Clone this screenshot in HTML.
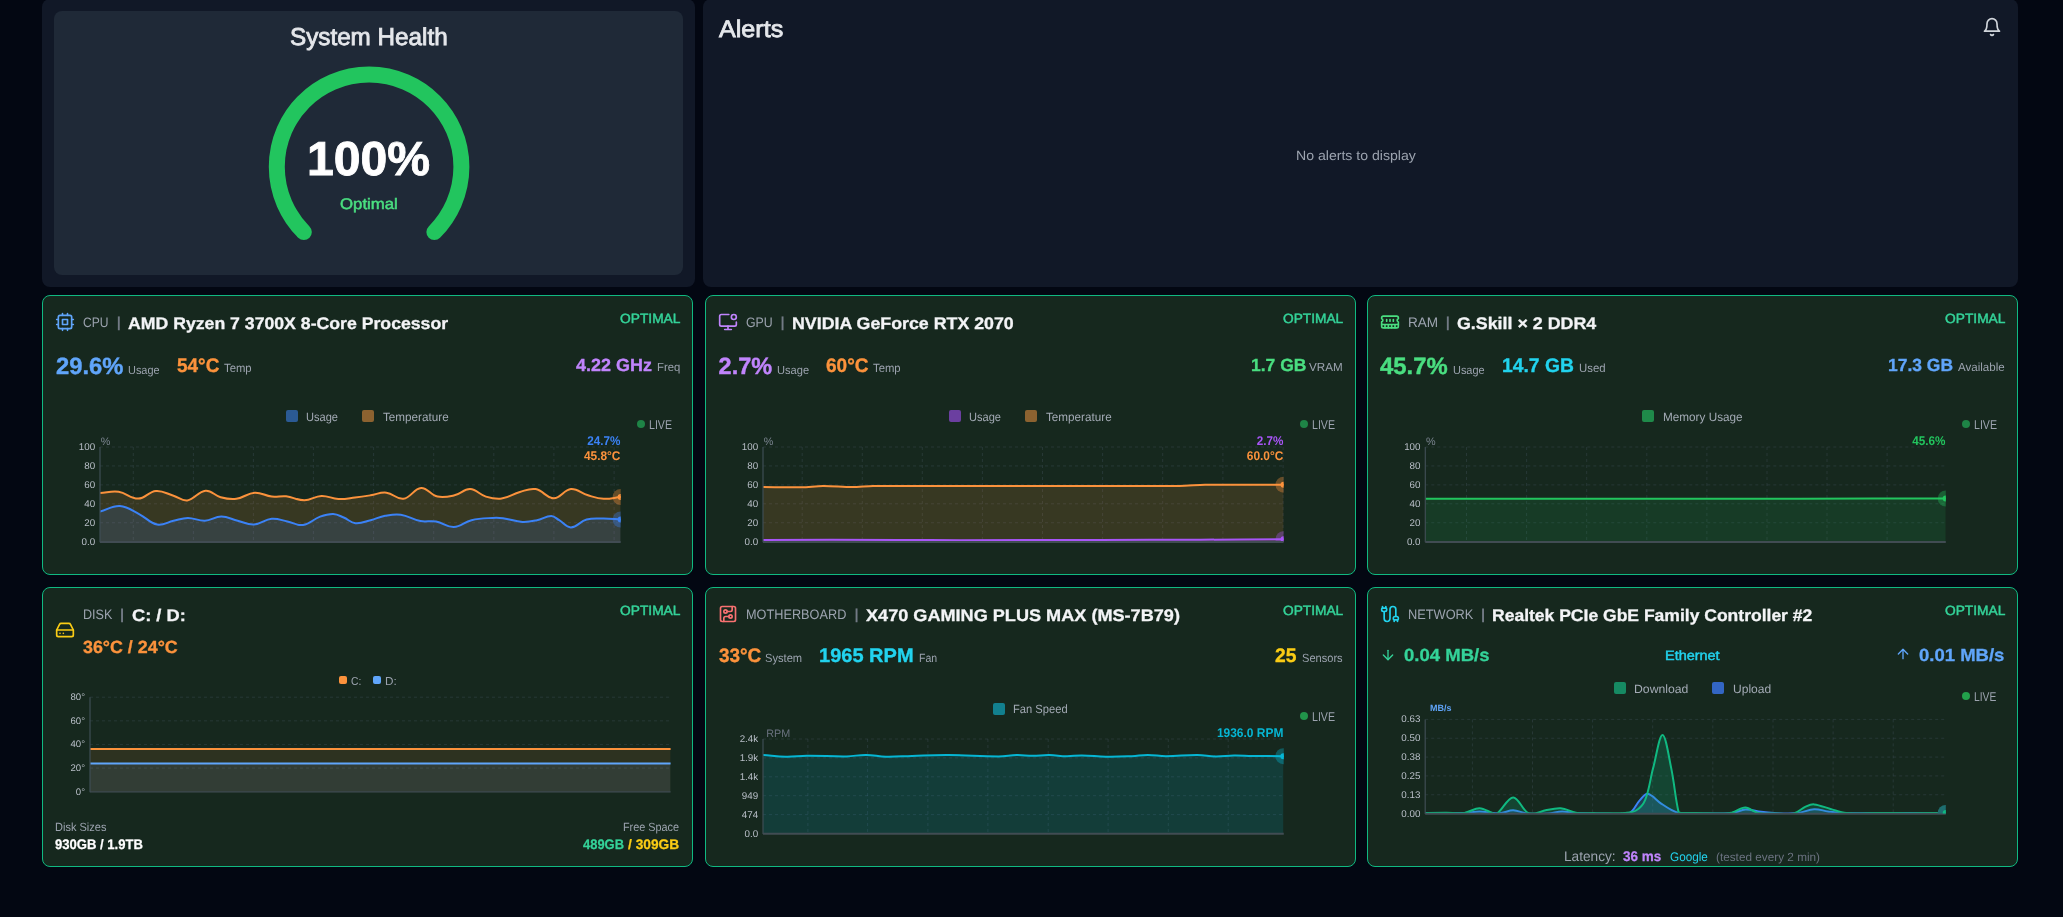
<!DOCTYPE html><html lang="en"><head><meta charset="utf-8"><title>System Monitor Dashboard</title>
<style>
*{box-sizing:border-box;margin:0;padding:0}
html,body{width:2063px;height:917px;overflow:hidden;background:#030712}
body{position:relative;font-family:"Liberation Sans", Arial, sans-serif;-webkit-font-smoothing:antialiased}
.card{position:absolute;border-radius:8px;overflow:hidden;will-change:transform}
.top{background:#111827}
.hw{background:#16281e;border:1px solid #10b981}
.hw>*{margin:-1px 0 0 -1px}
.inner{position:absolute;left:12px;top:12px;width:629px;height:264px;border-radius:8px;background:#1f2937}
.t{position:absolute;white-space:nowrap;line-height:1;transform-origin:0 0;display:block;text-rendering:geometricPrecision}
.ic,.chart,.lb{position:absolute;display:block}
.chart{left:0;top:0;pointer-events:none}
.chart text{font-family:"Liberation Sans", Arial, sans-serif;text-rendering:geometricPrecision}
</style></head><body>
<section class="card top" style="left:42px;top:-1px;width:653px;height:288px"><div class="inner"></div><svg class="chart" width="653" height="288" viewBox="0 0 653 288"><path d="M261.83 233.07A92.3 92.3 0 1 1 392.37 233.07" fill="none" stroke="#22c55e" stroke-width="16" stroke-linecap="round"/></svg><span class="t" style="left:248.20px;top:27.00px;font-size:24.3px;color:#e5e7eb;-webkit-text-stroke:0.83px;transform:scaleX(0.9976)">System Health</span><span class="t" style="left:264.96px;top:136.60px;font-size:47.6px;color:#ffffff;font-weight:700;-webkit-text-stroke:0.86px;transform:scaleX(1.0118)">100%</span><span class="t" style="left:297.80px;top:198.10px;font-size:15.3px;color:#4ade80;-webkit-text-stroke:0.52px;transform:scaleX(1.0974)">Optimal</span></section>
<section class="card top" style="left:703px;top:-1px;width:1315px;height:288px"><svg class="ic" style="left:1279.20px;top:18.00px" width="20" height="20" viewBox="0 0 24 24" fill="none" stroke="#d1d5db" stroke-width="2" stroke-linecap="round" stroke-linejoin="round"><path d="M6 8a6 6 0 0 1 12 0c0 7 3 9 3 9H3s3-2 3-9"/><path d="M10.3 21a1.94 1.94 0 0 0 3.4 0"/></svg><span class="t" style="left:15.90px;top:19.00px;font-size:23.9px;color:#e5e7eb;-webkit-text-stroke:0.81px;transform:scaleX(1.0520)">Alerts</span><span class="t" style="left:593.35px;top:150.00px;font-size:13.4px;color:#9ca3af;transform:scaleX(1.0523)">No alerts to display</span></section>
<section class="card hw" style="left:42px;top:295px;width:651px;height:280px"><svg class="ic" style="left:13.00px;top:17.00px" width="20" height="20" viewBox="0 0 24 24" fill="none" stroke="#60a5fa" stroke-width="2" stroke-linecap="round" stroke-linejoin="round"><rect width="16" height="16" x="4" y="4" rx="2"/><rect width="6" height="6" x="9" y="9"/><path d="M15 2v2M15 20v2M2 15h2M2 9h2M20 15h2M20 9h2M9 2v2M9 20v2"/></svg><i class="lb" style="left:244.00px;top:115.00px;width:12px;height:12px;background:#2b5a94;border-radius:2px"></i><i class="lb" style="left:320.00px;top:115.00px;width:12px;height:12px;background:#8c6230;border-radius:2px"></i><i class="lb" style="left:595.00px;top:125.00px;width:8px;height:8px;background:#1e8446;border-radius:50%"></i><svg class="chart" width="651" height="280" viewBox="0 0 651 280"><defs><clipPath id="clip-cpu"><rect x="58.00" y="140.00" width="520.70" height="106.70"/></clipPath></defs><line x1="58.00" x2="578.70" y1="152.00" y2="152.00" stroke="rgba(100,116,139,0.22)" stroke-width="1" stroke-dasharray="3 3"/><line x1="58.00" x2="578.70" y1="170.94" y2="170.94" stroke="rgba(100,116,139,0.22)" stroke-width="1" stroke-dasharray="3 3"/><line x1="58.00" x2="578.70" y1="189.88" y2="189.88" stroke="rgba(100,116,139,0.22)" stroke-width="1" stroke-dasharray="3 3"/><line x1="58.00" x2="578.70" y1="208.82" y2="208.82" stroke="rgba(100,116,139,0.22)" stroke-width="1" stroke-dasharray="3 3"/><line x1="58.00" x2="578.70" y1="227.76" y2="227.76" stroke="rgba(100,116,139,0.22)" stroke-width="1" stroke-dasharray="3 3"/><line x1="91.30" x2="91.30" y1="152.00" y2="246.70" stroke="rgba(100,116,139,0.22)" stroke-width="1" stroke-dasharray="3 3"/><line x1="151.40" x2="151.40" y1="152.00" y2="246.70" stroke="rgba(100,116,139,0.22)" stroke-width="1" stroke-dasharray="3 3"/><line x1="211.40" x2="211.40" y1="152.00" y2="246.70" stroke="rgba(100,116,139,0.22)" stroke-width="1" stroke-dasharray="3 3"/><line x1="271.40" x2="271.40" y1="152.00" y2="246.70" stroke="rgba(100,116,139,0.22)" stroke-width="1" stroke-dasharray="3 3"/><line x1="331.60" x2="331.60" y1="152.00" y2="246.70" stroke="rgba(100,116,139,0.22)" stroke-width="1" stroke-dasharray="3 3"/><line x1="391.70" x2="391.70" y1="152.00" y2="246.70" stroke="rgba(100,116,139,0.22)" stroke-width="1" stroke-dasharray="3 3"/><line x1="451.80" x2="451.80" y1="152.00" y2="246.70" stroke="rgba(100,116,139,0.22)" stroke-width="1" stroke-dasharray="3 3"/><line x1="511.90" x2="511.90" y1="152.00" y2="246.70" stroke="rgba(100,116,139,0.22)" stroke-width="1" stroke-dasharray="3 3"/><line x1="572.10" x2="572.10" y1="152.00" y2="246.70" stroke="rgba(100,116,139,0.22)" stroke-width="1" stroke-dasharray="3 3"/><g clip-path="url(#clip-cpu)"><path d="M58.0 198.1C65.4 197.6 69.4 195.8 76.6 196.8C84.6 198.0 88.5 203.8 96.2 203.6C103.4 203.4 106.6 196.6 113.9 196.0C120.8 195.4 124.5 198.6 131.5 200.7C137.1 202.4 140.0 206.3 145.3 205.5C152.8 204.3 156.1 196.4 163.6 195.7C169.5 195.1 172.4 200.6 178.6 202.2C184.6 203.8 188.2 204.6 194.3 203.8C201.8 202.8 205.2 198.2 212.7 197.7C219.4 197.3 222.8 200.8 229.7 201.6C235.4 202.3 238.4 200.7 244.1 201.3C251.5 202.1 255.1 205.4 262.4 205.3C269.2 205.2 272.5 201.2 279.4 200.9C286.1 200.6 289.6 203.7 296.4 204.0C303.0 204.3 306.4 203.3 313.0 202.5C319.3 201.8 322.4 201.3 328.7 200.3C335.0 199.3 338.3 197.0 344.4 197.7C351.4 198.4 354.9 204.7 361.4 203.8C368.8 202.8 371.9 193.6 379.1 193.1C385.5 192.7 388.6 200.1 395.5 201.6C401.9 203.0 405.9 201.8 412.5 200.3C419.0 198.8 422.0 193.8 428.2 194.1C434.6 194.4 437.3 199.6 443.9 201.6C449.9 203.4 453.5 204.4 459.6 203.6C467.1 202.6 470.4 199.1 477.9 197.0C484.0 195.3 487.6 193.0 493.6 194.1C501.2 195.5 504.6 203.3 511.9 203.3C518.8 203.3 521.9 194.7 528.9 194.1C535.5 193.5 539.0 198.2 546.0 200.3C552.2 202.1 555.4 203.5 561.7 203.8C568.4 204.1 571.8 202.7 578.6 202.0L578.6 246.7L58.0 246.7Z" fill="rgba(251,146,60,0.15)" stroke="none"/><path d="M58.0 198.1C65.4 197.6 69.4 195.8 76.6 196.8C84.6 198.0 88.5 203.8 96.2 203.6C103.4 203.4 106.6 196.6 113.9 196.0C120.8 195.4 124.5 198.6 131.5 200.7C137.1 202.4 140.0 206.3 145.3 205.5C152.8 204.3 156.1 196.4 163.6 195.7C169.5 195.1 172.4 200.6 178.6 202.2C184.6 203.8 188.2 204.6 194.3 203.8C201.8 202.8 205.2 198.2 212.7 197.7C219.4 197.3 222.8 200.8 229.7 201.6C235.4 202.3 238.4 200.7 244.1 201.3C251.5 202.1 255.1 205.4 262.4 205.3C269.2 205.2 272.5 201.2 279.4 200.9C286.1 200.6 289.6 203.7 296.4 204.0C303.0 204.3 306.4 203.3 313.0 202.5C319.3 201.8 322.4 201.3 328.7 200.3C335.0 199.3 338.3 197.0 344.4 197.7C351.4 198.4 354.9 204.7 361.4 203.8C368.8 202.8 371.9 193.6 379.1 193.1C385.5 192.7 388.6 200.1 395.5 201.6C401.9 203.0 405.9 201.8 412.5 200.3C419.0 198.8 422.0 193.8 428.2 194.1C434.6 194.4 437.3 199.6 443.9 201.6C449.9 203.4 453.5 204.4 459.6 203.6C467.1 202.6 470.4 199.1 477.9 197.0C484.0 195.3 487.6 193.0 493.6 194.1C501.2 195.5 504.6 203.3 511.9 203.3C518.8 203.3 521.9 194.7 528.9 194.1C535.5 193.5 539.0 198.2 546.0 200.3C552.2 202.1 555.4 203.5 561.7 203.8C568.4 204.1 571.8 202.7 578.6 202.0" fill="none" stroke="#fb923c" stroke-width="2" stroke-linejoin="round" stroke-linecap="round"/><path d="M58.0 216.6C66.0 214.4 70.1 210.5 77.9 211.0C85.9 211.5 89.9 215.5 97.5 219.3C104.8 222.9 107.7 228.1 115.2 229.5C121.3 230.7 125.0 227.2 131.5 225.8C137.2 224.6 140.1 222.9 145.9 222.9C152.7 222.9 156.2 226.1 162.9 225.8C169.5 225.5 172.7 221.6 179.3 221.6C185.9 221.6 189.1 224.2 195.7 225.8C202.2 227.4 205.6 229.9 212.0 229.5C219.2 229.1 222.5 224.4 229.7 223.8C235.9 223.2 239.2 225.3 245.4 226.5C251.7 227.7 255.1 230.9 261.1 230.0C268.2 228.9 271.0 224.2 278.1 221.6C283.1 219.8 286.0 218.8 291.2 219.0C295.5 219.2 297.6 220.8 301.7 222.5C306.5 224.5 308.5 227.7 313.4 228.2C319.3 228.8 322.7 226.7 328.7 225.2C334.5 223.7 337.2 221.9 343.1 220.8C349.3 219.7 352.7 218.8 358.8 219.7C366.8 220.9 370.4 224.6 378.4 226.1C384.5 227.3 388.0 225.4 394.1 226.5C401.3 227.8 404.8 232.4 411.8 232.1C419.0 231.8 422.2 226.9 429.5 225.2C437.6 223.3 442.0 223.4 450.4 222.9C454.6 222.6 456.7 222.6 460.9 223.2C468.8 224.2 472.6 226.4 480.5 226.9C486.2 227.2 489.2 226.4 494.9 225.2C500.8 224.0 503.7 221.0 509.3 221.0C512.6 221.0 514.1 223.4 517.2 225.2C521.9 228.0 524.1 232.5 528.9 232.4C535.1 232.2 538.0 226.3 544.6 224.5C551.1 222.8 554.9 223.6 561.7 223.6C568.5 223.6 571.8 224.1 578.6 224.5L578.6 246.7L58.0 246.7Z" fill="rgba(59,130,246,0.15)" stroke="none"/><path d="M58.0 216.6C66.0 214.4 70.1 210.5 77.9 211.0C85.9 211.5 89.9 215.5 97.5 219.3C104.8 222.9 107.7 228.1 115.2 229.5C121.3 230.7 125.0 227.2 131.5 225.8C137.2 224.6 140.1 222.9 145.9 222.9C152.7 222.9 156.2 226.1 162.9 225.8C169.5 225.5 172.7 221.6 179.3 221.6C185.9 221.6 189.1 224.2 195.7 225.8C202.2 227.4 205.6 229.9 212.0 229.5C219.2 229.1 222.5 224.4 229.7 223.8C235.9 223.2 239.2 225.3 245.4 226.5C251.7 227.7 255.1 230.9 261.1 230.0C268.2 228.9 271.0 224.2 278.1 221.6C283.1 219.8 286.0 218.8 291.2 219.0C295.5 219.2 297.6 220.8 301.7 222.5C306.5 224.5 308.5 227.7 313.4 228.2C319.3 228.8 322.7 226.7 328.7 225.2C334.5 223.7 337.2 221.9 343.1 220.8C349.3 219.7 352.7 218.8 358.8 219.7C366.8 220.9 370.4 224.6 378.4 226.1C384.5 227.3 388.0 225.4 394.1 226.5C401.3 227.8 404.8 232.4 411.8 232.1C419.0 231.8 422.2 226.9 429.5 225.2C437.6 223.3 442.0 223.4 450.4 222.9C454.6 222.6 456.7 222.6 460.9 223.2C468.8 224.2 472.6 226.4 480.5 226.9C486.2 227.2 489.2 226.4 494.9 225.2C500.8 224.0 503.7 221.0 509.3 221.0C512.6 221.0 514.1 223.4 517.2 225.2C521.9 228.0 524.1 232.5 528.9 232.4C535.1 232.2 538.0 226.3 544.6 224.5C551.1 222.8 554.9 223.6 561.7 223.6C568.5 223.6 571.8 224.1 578.6 224.5" fill="none" stroke="#3b82f6" stroke-width="2" stroke-linejoin="round" stroke-linecap="round"/><circle cx="578.6" cy="202.0" r="8" fill="#fb923c" fill-opacity="0.35"/><circle cx="578.6" cy="202.0" r="3" fill="#fb923c"/><circle cx="578.6" cy="224.5" r="8" fill="#3b82f6" fill-opacity="0.35"/><circle cx="578.6" cy="224.5" r="3" fill="#3b82f6"/></g><line x1="58.00" x2="58.00" y1="152.00" y2="247.20" stroke="#3f4d54" stroke-width="1.2"/><line x1="58.00" x2="578.70" y1="246.90" y2="246.90" stroke="#414c53" stroke-width="2"/><text x="53.20" y="155.01" text-anchor="end" font-size="9.8" fill="#b9bfc8">100</text><text x="53.20" y="173.95" text-anchor="end" font-size="9.8" fill="#b9bfc8">80</text><text x="53.20" y="192.89" text-anchor="end" font-size="9.8" fill="#b9bfc8">60</text><text x="53.20" y="211.83" text-anchor="end" font-size="9.8" fill="#b9bfc8">40</text><text x="53.20" y="230.77" text-anchor="end" font-size="9.8" fill="#b9bfc8">20</text><text x="53.20" y="249.71" text-anchor="end" font-size="9.8" fill="#b9bfc8">0.0</text><text x="58.8" y="149.8" font-size="10.8" fill="#7b8490">%</text><text x="545.30" y="150.00" font-size="12.6" font-weight="700" textLength="33.2" lengthAdjust="spacingAndGlyphs" fill="#3b82f6">24.7%</text><text x="541.90" y="165.20" font-size="12.6" font-weight="700" textLength="36.6" lengthAdjust="spacingAndGlyphs" fill="#fb923c">45.8°C</text></svg><span class="t" style="left:41.30px;top:20.90px;font-size:13.7px;color:#9ca3af;transform:scaleX(0.8817)">CPU</span><span class="t" style="left:74.80px;top:21.00px;font-size:14.6px;color:#727a85;font-weight:700">|</span><span class="t" style="left:86.40px;top:20.60px;font-size:16.8px;color:#f3f4f6;font-weight:700;-webkit-text-stroke:0.30px;transform:scaleX(1.0528)">AMD Ryzen 7 3700X 8-Core Processor</span><span class="t" style="left:577.90px;top:17.00px;font-size:13.4px;color:#34d399;-webkit-text-stroke:0.46px;transform:scaleX(1.0286)">OPTIMAL</span><span class="t" style="left:13.50px;top:59.80px;font-size:23.5px;color:#60a5fa;font-weight:700;-webkit-text-stroke:0.42px;transform:scaleX(1.0114)">29.6%</span><span class="t" style="left:86.40px;top:69.80px;font-size:11.8px;color:#9ca3af;transform:scaleX(0.9265)">Usage</span><span class="t" style="left:135.40px;top:62.00px;font-size:19.6px;color:#fb923c;font-weight:700;-webkit-text-stroke:0.35px;transform:scaleX(0.9672)">54°C</span><span class="t" style="left:182.00px;top:68.00px;font-size:11.9px;color:#9ca3af;transform:scaleX(0.9504)">Temp</span><span class="t" style="left:534.20px;top:61.80px;font-size:17.6px;color:#c084fc;font-weight:700;-webkit-text-stroke:0.32px;transform:scaleX(1.0212)">4.22 GHz</span><span class="t" style="left:614.70px;top:66.80px;font-size:11.8px;color:#9ca3af;transform:scaleX(0.9622)">Freq</span><span class="t" style="left:263.70px;top:115.90px;font-size:12.0px;color:#a3aab5;transform:scaleX(0.9225)">Usage</span><span class="t" style="left:341.00px;top:115.90px;font-size:12.0px;color:#a3aab5;transform:scaleX(0.9750)">Temperature</span><span class="t" style="left:606.67px;top:123.80px;font-size:12.8px;color:#9ca3af;transform:scaleX(0.8280)">LIVE</span></section>
<section class="card hw" style="left:705px;top:295px;width:651px;height:280px"><svg class="ic" style="left:13.00px;top:17.00px" width="20" height="20" viewBox="0 0 24 24" fill="none" stroke="#c084fc" stroke-width="2" stroke-linecap="round" stroke-linejoin="round"><circle cx="19" cy="6" r="3"/><path d="M22 12v3a2 2 0 0 1-2 2H4a2 2 0 0 1-2-2V5a2 2 0 0 1 2-2h9"/><path d="M12 17v4M8 21h8"/></svg><i class="lb" style="left:244.00px;top:115.00px;width:12px;height:12px;background:#6b3fa0;border-radius:2px"></i><i class="lb" style="left:320.00px;top:115.00px;width:12px;height:12px;background:#8c6230;border-radius:2px"></i><i class="lb" style="left:595.00px;top:125.00px;width:8px;height:8px;background:#1e8446;border-radius:50%"></i><svg class="chart" width="651" height="280" viewBox="0 0 651 280"><defs><clipPath id="clip-gpu"><rect x="58.00" y="140.00" width="520.60" height="106.70"/></clipPath></defs><line x1="58.00" x2="578.60" y1="152.00" y2="152.00" stroke="rgba(100,116,139,0.22)" stroke-width="1" stroke-dasharray="3 3"/><line x1="58.00" x2="578.60" y1="170.94" y2="170.94" stroke="rgba(100,116,139,0.22)" stroke-width="1" stroke-dasharray="3 3"/><line x1="58.00" x2="578.60" y1="189.88" y2="189.88" stroke="rgba(100,116,139,0.22)" stroke-width="1" stroke-dasharray="3 3"/><line x1="58.00" x2="578.60" y1="208.82" y2="208.82" stroke="rgba(100,116,139,0.22)" stroke-width="1" stroke-dasharray="3 3"/><line x1="58.00" x2="578.60" y1="227.76" y2="227.76" stroke="rgba(100,116,139,0.22)" stroke-width="1" stroke-dasharray="3 3"/><line x1="97.20" x2="97.20" y1="152.00" y2="246.70" stroke="rgba(100,116,139,0.22)" stroke-width="1" stroke-dasharray="3 3"/><line x1="157.30" x2="157.30" y1="152.00" y2="246.70" stroke="rgba(100,116,139,0.22)" stroke-width="1" stroke-dasharray="3 3"/><line x1="217.30" x2="217.30" y1="152.00" y2="246.70" stroke="rgba(100,116,139,0.22)" stroke-width="1" stroke-dasharray="3 3"/><line x1="277.40" x2="277.40" y1="152.00" y2="246.70" stroke="rgba(100,116,139,0.22)" stroke-width="1" stroke-dasharray="3 3"/><line x1="337.50" x2="337.50" y1="152.00" y2="246.70" stroke="rgba(100,116,139,0.22)" stroke-width="1" stroke-dasharray="3 3"/><line x1="397.60" x2="397.60" y1="152.00" y2="246.70" stroke="rgba(100,116,139,0.22)" stroke-width="1" stroke-dasharray="3 3"/><line x1="457.70" x2="457.70" y1="152.00" y2="246.70" stroke="rgba(100,116,139,0.22)" stroke-width="1" stroke-dasharray="3 3"/><line x1="517.90" x2="517.90" y1="152.00" y2="246.70" stroke="rgba(100,116,139,0.22)" stroke-width="1" stroke-dasharray="3 3"/><line x1="578.10" x2="578.10" y1="152.00" y2="246.70" stroke="rgba(100,116,139,0.22)" stroke-width="1" stroke-dasharray="3 3"/><g clip-path="url(#clip-gpu)"><path d="M58.0 192.0C69.7 192.1 85.3 192.5 97.0 192.3C103.3 192.2 111.7 191.0 118.0 191.0C126.7 190.9 138.3 192.0 147.0 192.0C153.3 192.0 161.7 191.1 168.0 191.0C176.1 190.8 186.9 191.0 195.0 191.0C225.0 191.0 265.0 191.0 295.0 191.0C325.0 191.0 365.0 191.0 395.0 191.0C418.7 191.0 450.3 191.3 474.0 191.0C481.8 190.9 492.2 190.0 500.0 189.8C510.5 189.6 524.5 189.7 535.0 189.7C548.0 189.7 565.5 189.7 578.5 189.7L578.5 246.7L58.0 246.7Z" fill="rgba(251,146,60,0.15)" stroke="none"/><path d="M58.0 192.0C69.7 192.1 85.3 192.5 97.0 192.3C103.3 192.2 111.7 191.0 118.0 191.0C126.7 190.9 138.3 192.0 147.0 192.0C153.3 192.0 161.7 191.1 168.0 191.0C176.1 190.8 186.9 191.0 195.0 191.0C225.0 191.0 265.0 191.0 295.0 191.0C325.0 191.0 365.0 191.0 395.0 191.0C418.7 191.0 450.3 191.3 474.0 191.0C481.8 190.9 492.2 190.0 500.0 189.8C510.5 189.6 524.5 189.7 535.0 189.7C548.0 189.7 565.5 189.7 578.5 189.7" fill="none" stroke="#fb923c" stroke-width="2" stroke-linejoin="round" stroke-linecap="round"/><path d="M58.0 244.9C99.1 244.9 153.9 244.8 195.0 244.9C213.0 244.9 237.0 245.2 255.0 245.2C297.0 245.2 353.0 245.0 395.0 244.9C425.0 244.8 465.0 244.8 495.0 244.7C520.1 244.6 553.5 244.4 578.5 244.2L578.5 246.7L58.0 246.7Z" fill="rgba(168,85,247,0.15)" stroke="none"/><path d="M58.0 244.9C99.1 244.9 153.9 244.8 195.0 244.9C213.0 244.9 237.0 245.2 255.0 245.2C297.0 245.2 353.0 245.0 395.0 244.9C425.0 244.8 465.0 244.8 495.0 244.7C520.1 244.6 553.5 244.4 578.5 244.2" fill="none" stroke="#a855f7" stroke-width="2" stroke-linejoin="round" stroke-linecap="round"/><circle cx="578.5" cy="189.7" r="8" fill="#fb923c" fill-opacity="0.35"/><circle cx="578.5" cy="189.7" r="3" fill="#fb923c"/><circle cx="578.5" cy="244.2" r="8" fill="#a855f7" fill-opacity="0.35"/><circle cx="578.5" cy="244.2" r="3" fill="#a855f7"/></g><line x1="58.00" x2="58.00" y1="152.00" y2="247.20" stroke="#3f4d54" stroke-width="1.2"/><line x1="58.00" x2="578.60" y1="246.90" y2="246.90" stroke="#414c53" stroke-width="2"/><text x="53.20" y="155.01" text-anchor="end" font-size="9.8" fill="#b9bfc8">100</text><text x="53.20" y="173.95" text-anchor="end" font-size="9.8" fill="#b9bfc8">80</text><text x="53.20" y="192.89" text-anchor="end" font-size="9.8" fill="#b9bfc8">60</text><text x="53.20" y="211.83" text-anchor="end" font-size="9.8" fill="#b9bfc8">40</text><text x="53.20" y="230.77" text-anchor="end" font-size="9.8" fill="#b9bfc8">20</text><text x="53.20" y="249.71" text-anchor="end" font-size="9.8" fill="#b9bfc8">0.0</text><text x="58.8" y="149.8" font-size="10.8" fill="#7b8490">%</text><text x="551.70" y="150.00" font-size="12.6" font-weight="700" textLength="26.7" lengthAdjust="spacingAndGlyphs" fill="#a855f7">2.7%</text><text x="541.80" y="165.20" font-size="12.6" font-weight="700" textLength="36.6" lengthAdjust="spacingAndGlyphs" fill="#fb923c">60.0°C</text></svg><span class="t" style="left:41.30px;top:20.90px;font-size:13.7px;color:#9ca3af;transform:scaleX(0.9001)">GPU</span><span class="t" style="left:75.60px;top:21.00px;font-size:14.6px;color:#727a85;font-weight:700">|</span><span class="t" style="left:86.94px;top:20.60px;font-size:16.8px;color:#f3f4f6;font-weight:700;-webkit-text-stroke:0.30px;transform:scaleX(1.0599)">NVIDIA GeForce RTX 2070</span><span class="t" style="left:577.90px;top:17.00px;font-size:13.4px;color:#34d399;-webkit-text-stroke:0.46px;transform:scaleX(1.0234)">OPTIMAL</span><span class="t" style="left:13.60px;top:59.80px;font-size:23.5px;color:#c084fc;font-weight:700;-webkit-text-stroke:0.42px">2.7%</span><span class="t" style="left:72.30px;top:69.80px;font-size:11.8px;color:#9ca3af;transform:scaleX(0.9410)">Usage</span><span class="t" style="left:121.20px;top:62.00px;font-size:19.6px;color:#fb923c;font-weight:700;-webkit-text-stroke:0.35px;transform:scaleX(0.9695)">60°C</span><span class="t" style="left:168.00px;top:68.00px;font-size:11.9px;color:#9ca3af;transform:scaleX(0.9504)">Temp</span><span class="t" style="left:545.60px;top:61.80px;font-size:17.6px;color:#4ade80;font-weight:700;-webkit-text-stroke:0.32px;transform:scaleX(0.9957)">1.7 GB</span><span class="t" style="left:604.40px;top:66.80px;font-size:11.8px;color:#9ca3af;transform:scaleX(0.9863)">VRAM</span><span class="t" style="left:263.70px;top:115.90px;font-size:12.0px;color:#a3aab5;transform:scaleX(0.9225)">Usage</span><span class="t" style="left:341.00px;top:115.90px;font-size:12.0px;color:#a3aab5;transform:scaleX(0.9750)">Temperature</span><span class="t" style="left:606.67px;top:123.80px;font-size:12.8px;color:#9ca3af;transform:scaleX(0.8280)">LIVE</span></section>
<section class="card hw" style="left:1367px;top:295px;width:651px;height:280px"><svg class="ic" style="left:13.00px;top:17.00px" width="20" height="20" viewBox="0 0 24 24" fill="none" stroke="#4ade80" stroke-width="2" stroke-linecap="round" stroke-linejoin="round"><path d="M6 19v-3M10 19v-3M14 19v-3M18 19v-3M8 11V9M16 11V9M12 11V9M2 15h20"/><path d="M2 7a2 2 0 0 1 2-2h16a2 2 0 0 1 2 2v1.1a2 2 0 0 0 0 3.837V17a2 2 0 0 1-2 2H4a2 2 0 0 1-2-2v-5.1a2 2 0 0 0 0-3.837Z"/></svg><i class="lb" style="left:275.00px;top:115.00px;width:12px;height:12px;background:#1f8a4a;border-radius:2px"></i><i class="lb" style="left:595.00px;top:125.00px;width:8px;height:8px;background:#1e8446;border-radius:50%"></i><svg class="chart" width="651" height="280" viewBox="0 0 651 280"><defs><clipPath id="clip-ram"><rect x="58.30" y="140.00" width="520.50" height="106.70"/></clipPath></defs><line x1="58.30" x2="578.80" y1="152.00" y2="152.00" stroke="rgba(100,116,139,0.22)" stroke-width="1" stroke-dasharray="3 3"/><line x1="58.30" x2="578.80" y1="170.94" y2="170.94" stroke="rgba(100,116,139,0.22)" stroke-width="1" stroke-dasharray="3 3"/><line x1="58.30" x2="578.80" y1="189.88" y2="189.88" stroke="rgba(100,116,139,0.22)" stroke-width="1" stroke-dasharray="3 3"/><line x1="58.30" x2="578.80" y1="208.82" y2="208.82" stroke="rgba(100,116,139,0.22)" stroke-width="1" stroke-dasharray="3 3"/><line x1="58.30" x2="578.80" y1="227.76" y2="227.76" stroke="rgba(100,116,139,0.22)" stroke-width="1" stroke-dasharray="3 3"/><line x1="99.50" x2="99.50" y1="152.00" y2="246.70" stroke="rgba(100,116,139,0.22)" stroke-width="1" stroke-dasharray="3 3"/><line x1="159.60" x2="159.60" y1="152.00" y2="246.70" stroke="rgba(100,116,139,0.22)" stroke-width="1" stroke-dasharray="3 3"/><line x1="219.70" x2="219.70" y1="152.00" y2="246.70" stroke="rgba(100,116,139,0.22)" stroke-width="1" stroke-dasharray="3 3"/><line x1="279.80" x2="279.80" y1="152.00" y2="246.70" stroke="rgba(100,116,139,0.22)" stroke-width="1" stroke-dasharray="3 3"/><line x1="339.90" x2="339.90" y1="152.00" y2="246.70" stroke="rgba(100,116,139,0.22)" stroke-width="1" stroke-dasharray="3 3"/><line x1="400.00" x2="400.00" y1="152.00" y2="246.70" stroke="rgba(100,116,139,0.22)" stroke-width="1" stroke-dasharray="3 3"/><line x1="460.00" x2="460.00" y1="152.00" y2="246.70" stroke="rgba(100,116,139,0.22)" stroke-width="1" stroke-dasharray="3 3"/><line x1="520.10" x2="520.10" y1="152.00" y2="246.70" stroke="rgba(100,116,139,0.22)" stroke-width="1" stroke-dasharray="3 3"/><g clip-path="url(#clip-ram)"><path d="M58.3 203.8C93.2 203.8 198.1 203.8 233.0 203.8C273.0 203.8 393.0 203.7 433.0 203.7C462.1 203.7 549.6 203.5 578.7 203.5L578.7 246.7L58.3 246.7Z" fill="rgba(34,197,94,0.13)" stroke="none"/><path d="M58.3 203.8C93.2 203.8 198.1 203.8 233.0 203.8C273.0 203.8 393.0 203.7 433.0 203.7C462.1 203.7 549.6 203.5 578.7 203.5" fill="none" stroke="#22c55e" stroke-width="2" stroke-linejoin="round" stroke-linecap="round"/><circle cx="578.7" cy="203.5" r="8" fill="#22c55e" fill-opacity="0.35"/><circle cx="578.7" cy="203.5" r="3" fill="#22c55e"/></g><line x1="58.30" x2="58.30" y1="152.00" y2="247.20" stroke="#3f4d54" stroke-width="1.2"/><line x1="58.30" x2="578.80" y1="246.90" y2="246.90" stroke="#414c53" stroke-width="2"/><text x="53.50" y="155.01" text-anchor="end" font-size="9.8" fill="#b9bfc8">100</text><text x="53.50" y="173.95" text-anchor="end" font-size="9.8" fill="#b9bfc8">80</text><text x="53.50" y="192.89" text-anchor="end" font-size="9.8" fill="#b9bfc8">60</text><text x="53.50" y="211.83" text-anchor="end" font-size="9.8" fill="#b9bfc8">40</text><text x="53.50" y="230.77" text-anchor="end" font-size="9.8" fill="#b9bfc8">20</text><text x="53.50" y="249.71" text-anchor="end" font-size="9.8" fill="#b9bfc8">0.0</text><text x="59.1" y="149.8" font-size="10.8" fill="#7b8490">%</text><text x="545.20" y="150.00" font-size="12.6" font-weight="700" textLength="33.2" lengthAdjust="spacingAndGlyphs" fill="#22c55e">45.6%</text></svg><span class="t" style="left:40.61px;top:20.90px;font-size:13.7px;color:#9ca3af;transform:scaleX(0.9926)">RAM</span><span class="t" style="left:78.80px;top:21.00px;font-size:14.6px;color:#727a85;font-weight:700">|</span><span class="t" style="left:90.40px;top:20.60px;font-size:16.8px;color:#f3f4f6;font-weight:700;-webkit-text-stroke:0.30px;transform:scaleX(1.0622)">G.Skill × 2 DDR4</span><span class="t" style="left:577.70px;top:17.00px;font-size:13.4px;color:#34d399;-webkit-text-stroke:0.46px;transform:scaleX(1.0286)">OPTIMAL</span><span class="t" style="left:13.10px;top:59.80px;font-size:23.5px;color:#4ade80;font-weight:700;-webkit-text-stroke:0.42px;transform:scaleX(1.0144)">45.7%</span><span class="t" style="left:86.40px;top:69.80px;font-size:11.8px;color:#9ca3af;transform:scaleX(0.9265)">Usage</span><span class="t" style="left:135.02px;top:62.00px;font-size:19.6px;color:#22d3ee;font-weight:700;-webkit-text-stroke:0.35px;transform:scaleX(0.9844)">14.7 GB</span><span class="t" style="left:211.50px;top:68.00px;font-size:11.9px;color:#9ca3af;transform:scaleX(0.9578)">Used</span><span class="t" style="left:521.41px;top:61.80px;font-size:17.6px;color:#60a5fa;font-weight:700;-webkit-text-stroke:0.32px;transform:scaleX(0.9919)">17.3 GB</span><span class="t" style="left:590.60px;top:66.80px;font-size:11.8px;color:#9ca3af;transform:scaleX(0.9792)">Available</span><span class="t" style="left:295.70px;top:115.90px;font-size:12.0px;color:#a3aab5;transform:scaleX(0.9782)">Memory Usage</span><span class="t" style="left:606.97px;top:123.80px;font-size:12.8px;color:#9ca3af;transform:scaleX(0.8280)">LIVE</span></section>
<section class="card hw" style="left:42px;top:587px;width:651px;height:280px"><svg class="ic" style="left:13.00px;top:33.00px" width="20" height="20" viewBox="0 0 24 24" fill="none" stroke="#facc15" stroke-width="2" stroke-linecap="round" stroke-linejoin="round"><line x1="22" x2="2" y1="12" y2="12"/><path d="M5.45 5.11 2 12v6a2 2 0 0 0 2 2h16a2 2 0 0 0 2-2v-6l-3.45-6.89A2 2 0 0 0 16.76 4H7.24a2 2 0 0 0-1.79 1.11z"/><line x1="6" x2="6.01" y1="16" y2="16"/><line x1="10" x2="10.01" y1="16" y2="16"/></svg><i class="lb" style="left:297.00px;top:89.00px;width:8px;height:8px;background:#fb923c;border-radius:2px"></i><i class="lb" style="left:331.00px;top:89.00px;width:8px;height:8px;background:#60a5fa;border-radius:2px"></i><svg class="chart" width="651" height="280" viewBox="0 0 651 280"><defs><clipPath id="clip-disk"><rect x="48.00" y="98.20" width="580.60" height="106.50"/></clipPath></defs><line x1="48.00" x2="628.60" y1="110.20" y2="110.20" stroke="rgba(100,116,139,0.22)" stroke-width="1" stroke-dasharray="3 3"/><line x1="48.00" x2="628.60" y1="133.83" y2="133.83" stroke="rgba(100,116,139,0.22)" stroke-width="1" stroke-dasharray="3 3"/><line x1="48.00" x2="628.60" y1="157.45" y2="157.45" stroke="rgba(100,116,139,0.22)" stroke-width="1" stroke-dasharray="3 3"/><line x1="48.00" x2="628.60" y1="181.08" y2="181.08" stroke="rgba(100,116,139,0.22)" stroke-width="1" stroke-dasharray="3 3"/><g clip-path="url(#clip-disk)"><path d="M48.0 162.1L628.6 162.1L628.6 204.7L48.0 204.7Z" fill="rgba(251,146,60,0.1)" stroke="none"/><path d="M48.0 162.1L628.6 162.1" fill="none" stroke="#fb923c" stroke-width="2" stroke-linejoin="round" stroke-linecap="round"/><path d="M48.0 176.4L628.6 176.4L628.6 204.7L48.0 204.7Z" fill="rgba(96,165,250,0.1)" stroke="none"/><path d="M48.0 176.4L628.6 176.4" fill="none" stroke="#60a5fa" stroke-width="2" stroke-linejoin="round" stroke-linecap="round"/></g><line x1="48.00" x2="48.00" y1="110.20" y2="205.20" stroke="#3f4d54" stroke-width="1.2"/><line x1="48.00" x2="628.60" y1="204.90" y2="204.90" stroke="#414c53" stroke-width="1.3"/><text x="43.00" y="113.14" text-anchor="end" font-size="9.6" fill="#b9bfc8">80°</text><text x="43.00" y="136.76" text-anchor="end" font-size="9.6" fill="#b9bfc8">60°</text><text x="43.00" y="160.39" text-anchor="end" font-size="9.6" fill="#b9bfc8">40°</text><text x="43.00" y="184.01" text-anchor="end" font-size="9.6" fill="#b9bfc8">20°</text><text x="43.00" y="207.64" text-anchor="end" font-size="9.6" fill="#b9bfc8">0°</text></svg><span class="t" style="left:40.68px;top:20.90px;font-size:13.7px;color:#9ca3af;transform:scaleX(0.9183)">DISK</span><span class="t" style="left:78.00px;top:21.00px;font-size:14.6px;color:#727a85;font-weight:700">|</span><span class="t" style="left:89.60px;top:20.60px;font-size:16.8px;color:#f3f4f6;font-weight:700;-webkit-text-stroke:0.30px;transform:scaleX(1.0876)">C: / D:</span><span class="t" style="left:577.90px;top:17.00px;font-size:13.4px;color:#34d399;-webkit-text-stroke:0.46px;transform:scaleX(1.0286)">OPTIMAL</span><span class="t" style="left:41.30px;top:51.60px;font-size:17.6px;color:#fb923c;font-weight:700;-webkit-text-stroke:0.32px;transform:scaleX(1.0152)">36°C / 24°C</span><span class="t" style="left:309.00px;top:88.60px;font-size:11.6px;color:#9ca3af;transform:scaleX(0.8881)">C:</span><span class="t" style="left:342.90px;top:88.60px;font-size:11.6px;color:#9ca3af;transform:scaleX(1.0112)">D:</span><span class="t" style="left:13.30px;top:234.90px;font-size:11.9px;color:#9ca3af;transform:scaleX(0.9270)">Disk Sizes</span><span class="t" style="left:12.80px;top:250.80px;font-size:13.8px;color:#ffffff;font-weight:700;-webkit-text-stroke:0.25px;transform:scaleX(0.9481)">930GB / 1.9TB</span><span class="t" style="left:580.80px;top:234.90px;font-size:11.9px;color:#9ca3af;transform:scaleX(0.9118)">Free Space</span><span class="t" style="left:541.00px;top:250.70px;font-size:13.8px;color:#34d399;font-weight:700;-webkit-text-stroke:0.25px;transform:scaleX(0.9371)">489GB</span><span class="t" style="left:586.00px;top:250.70px;font-size:13.8px;color:#facc15;font-weight:700;-webkit-text-stroke:0.25px;transform:scaleX(0.9958)">/ 309GB</span></section>
<section class="card hw" style="left:705px;top:587px;width:651px;height:280px"><svg class="ic" style="left:13.00px;top:17.00px" width="20" height="20" viewBox="0 0 24 24" fill="none" stroke="#f87171" stroke-width="2" stroke-linecap="round" stroke-linejoin="round"><rect width="18" height="18" x="3" y="3" rx="2"/><path d="M11 9h4a2 2 0 0 0 2-2V3"/><circle cx="9" cy="9" r="2"/><path d="M7 21v-4a2 2 0 0 1 2-2h4"/><circle cx="15" cy="15" r="2"/></svg><i class="lb" style="left:288.00px;top:115.50px;width:12px;height:12px;background:#12808f;border-radius:2px"></i><i class="lb" style="left:595.00px;top:125.00px;width:8px;height:8px;background:#21944a;border-radius:50%"></i><svg class="chart" width="651" height="280" viewBox="0 0 651 280"><defs><clipPath id="clip-mobo"><rect x="58.00" y="140.00" width="520.80" height="106.50"/></clipPath></defs><line x1="58.00" x2="578.80" y1="152.00" y2="152.00" stroke="rgba(100,116,139,0.22)" stroke-width="1" stroke-dasharray="3 3"/><line x1="58.00" x2="578.80" y1="170.90" y2="170.90" stroke="rgba(100,116,139,0.22)" stroke-width="1" stroke-dasharray="3 3"/><line x1="58.00" x2="578.80" y1="189.80" y2="189.80" stroke="rgba(100,116,139,0.22)" stroke-width="1" stroke-dasharray="3 3"/><line x1="58.00" x2="578.80" y1="208.70" y2="208.70" stroke="rgba(100,116,139,0.22)" stroke-width="1" stroke-dasharray="3 3"/><line x1="58.00" x2="578.80" y1="227.60" y2="227.60" stroke="rgba(100,116,139,0.22)" stroke-width="1" stroke-dasharray="3 3"/><line x1="102.90" x2="102.90" y1="152.00" y2="246.50" stroke="rgba(100,116,139,0.22)" stroke-width="1" stroke-dasharray="3 3"/><line x1="162.60" x2="162.60" y1="152.00" y2="246.50" stroke="rgba(100,116,139,0.22)" stroke-width="1" stroke-dasharray="3 3"/><line x1="222.90" x2="222.90" y1="152.00" y2="246.50" stroke="rgba(100,116,139,0.22)" stroke-width="1" stroke-dasharray="3 3"/><line x1="282.90" x2="282.90" y1="152.00" y2="246.50" stroke="rgba(100,116,139,0.22)" stroke-width="1" stroke-dasharray="3 3"/><line x1="343.20" x2="343.20" y1="152.00" y2="246.50" stroke="rgba(100,116,139,0.22)" stroke-width="1" stroke-dasharray="3 3"/><line x1="403.10" x2="403.10" y1="152.00" y2="246.50" stroke="rgba(100,116,139,0.22)" stroke-width="1" stroke-dasharray="3 3"/><line x1="463.30" x2="463.30" y1="152.00" y2="246.50" stroke="rgba(100,116,139,0.22)" stroke-width="1" stroke-dasharray="3 3"/><line x1="523.20" x2="523.20" y1="152.00" y2="246.50" stroke="rgba(100,116,139,0.22)" stroke-width="1" stroke-dasharray="3 3"/><g clip-path="url(#clip-mobo)"><path d="M58.0 167.9C67.2 168.6 71.8 169.5 81.0 169.7C89.4 169.9 93.6 168.7 102.0 168.7C117.8 168.6 125.8 169.6 141.6 169.4C149.4 169.3 153.2 167.8 161.0 167.9C169.0 168.0 173.0 169.5 181.0 169.7C191.4 169.9 196.6 169.2 207.0 168.9C221.7 168.5 229.0 168.0 243.7 168.1C263.6 168.2 273.6 169.4 293.5 169.4C300.8 169.4 304.5 168.3 311.8 168.1C318.1 168.0 321.2 168.7 327.5 168.7C334.3 168.7 337.7 168.0 344.5 168.1C351.3 168.2 354.7 169.1 361.5 169.2C367.7 169.3 370.8 168.3 377.0 168.4C386.5 168.5 391.3 169.5 400.8 169.7C411.3 169.9 416.5 169.6 427.0 169.2C433.3 168.9 436.4 167.9 442.7 167.9C450.0 167.9 453.7 169.2 461.0 169.2C473.6 169.2 479.9 167.8 492.4 167.9C499.7 167.9 503.4 169.3 510.7 169.4C518.0 169.5 521.7 168.5 529.0 168.4C536.4 168.3 540.0 168.8 547.4 168.9C559.8 169.1 565.9 169.1 578.3 169.2L578.3 246.5L58.0 246.5Z" fill="rgba(6,182,212,0.15)" stroke="none"/><path d="M58.0 167.9C67.2 168.6 71.8 169.5 81.0 169.7C89.4 169.9 93.6 168.7 102.0 168.7C117.8 168.6 125.8 169.6 141.6 169.4C149.4 169.3 153.2 167.8 161.0 167.9C169.0 168.0 173.0 169.5 181.0 169.7C191.4 169.9 196.6 169.2 207.0 168.9C221.7 168.5 229.0 168.0 243.7 168.1C263.6 168.2 273.6 169.4 293.5 169.4C300.8 169.4 304.5 168.3 311.8 168.1C318.1 168.0 321.2 168.7 327.5 168.7C334.3 168.7 337.7 168.0 344.5 168.1C351.3 168.2 354.7 169.1 361.5 169.2C367.7 169.3 370.8 168.3 377.0 168.4C386.5 168.5 391.3 169.5 400.8 169.7C411.3 169.9 416.5 169.6 427.0 169.2C433.3 168.9 436.4 167.9 442.7 167.9C450.0 167.9 453.7 169.2 461.0 169.2C473.6 169.2 479.9 167.8 492.4 167.9C499.7 167.9 503.4 169.3 510.7 169.4C518.0 169.5 521.7 168.5 529.0 168.4C536.4 168.3 540.0 168.8 547.4 168.9C559.8 169.1 565.9 169.1 578.3 169.2" fill="none" stroke="#06b6d4" stroke-width="2" stroke-linejoin="round" stroke-linecap="round"/><circle cx="578.3" cy="169.2" r="8" fill="#06b6d4" fill-opacity="0.35"/><circle cx="578.3" cy="169.2" r="3" fill="#06b6d4"/></g><line x1="58.00" x2="58.00" y1="152.00" y2="247.00" stroke="#3f4d54" stroke-width="1.2"/><line x1="58.00" x2="578.80" y1="246.70" y2="246.70" stroke="#414c53" stroke-width="2"/><text x="53.20" y="155.01" text-anchor="end" font-size="9.8" fill="#b9bfc8">2.4k</text><text x="53.20" y="173.91" text-anchor="end" font-size="9.8" fill="#b9bfc8">1.9k</text><text x="53.20" y="192.81" text-anchor="end" font-size="9.8" fill="#b9bfc8">1.4k</text><text x="53.20" y="211.71" text-anchor="end" font-size="9.8" fill="#b9bfc8">949</text><text x="53.20" y="230.61" text-anchor="end" font-size="9.8" fill="#b9bfc8">474</text><text x="53.20" y="249.51" text-anchor="end" font-size="9.8" fill="#b9bfc8">0.0</text><text x="61.2" y="150.2" font-size="10.8" fill="#6b7280">RPM</text><text x="511.90" y="150.20" font-size="12.6" font-weight="700" textLength="66.5" lengthAdjust="spacingAndGlyphs" fill="#06b6d4">1936.0 RPM</text></svg><span class="t" style="left:40.67px;top:20.90px;font-size:13.7px;color:#9ca3af;transform:scaleX(0.9291)">MOTHERBOARD</span><span class="t" style="left:149.50px;top:21.00px;font-size:14.6px;color:#727a85;font-weight:700">|</span><span class="t" style="left:160.70px;top:20.60px;font-size:16.8px;color:#f3f4f6;font-weight:700;-webkit-text-stroke:0.30px;transform:scaleX(1.0791)">X470 GAMING PLUS MAX (MS-7B79)</span><span class="t" style="left:577.90px;top:17.00px;font-size:13.4px;color:#34d399;-webkit-text-stroke:0.46px;transform:scaleX(1.0251)">OPTIMAL</span><span class="t" style="left:13.60px;top:60.00px;font-size:19.6px;color:#fb923c;font-weight:700;-webkit-text-stroke:0.35px;transform:scaleX(0.9649)">33°C</span><span class="t" style="left:60.00px;top:66.00px;font-size:11.9px;color:#9ca3af;transform:scaleX(0.9361)">System</span><span class="t" style="left:114.48px;top:60.00px;font-size:19.6px;color:#22d3ee;font-weight:700;-webkit-text-stroke:0.35px;transform:scaleX(1.0214)">1965 RPM</span><span class="t" style="left:214.30px;top:66.00px;font-size:11.9px;color:#9ca3af;transform:scaleX(0.8855)">Fan</span><span class="t" style="left:570.20px;top:60.00px;font-size:19.6px;color:#facc15;font-weight:700;-webkit-text-stroke:0.35px;transform:scaleX(0.9819)">25</span><span class="t" style="left:596.70px;top:66.00px;font-size:11.9px;color:#9ca3af;transform:scaleX(0.9319)">Sensors</span><span class="t" style="left:308.30px;top:115.90px;font-size:12.0px;color:#a3aab5;transform:scaleX(0.9304)">Fan Speed</span><span class="t" style="left:606.67px;top:123.80px;font-size:12.8px;color:#9ca3af;transform:scaleX(0.8280)">LIVE</span></section>
<section class="card hw" style="left:1367px;top:587px;width:651px;height:280px"><svg class="ic" style="left:13.00px;top:17.00px" width="20" height="20" viewBox="0 0 24 24" fill="none" stroke="#22d3ee" stroke-width="2" stroke-linecap="round" stroke-linejoin="round"><path d="M17 21v-2a1 1 0 0 1-1-1v-1a2 2 0 0 1 2-2h2a2 2 0 0 1 2 2v1a1 1 0 0 1-1 1"/><path d="M19 15V6.5a1 1 0 0 0-7 0v11a1 1 0 0 1-7 0V9"/><path d="M21 21v-2h-4"/><path d="M3 5h4V3"/><path d="M7 5a1 1 0 0 1 1 1v1a2 2 0 0 1-2 2H4a2 2 0 0 1-2-2V6a1 1 0 0 1 1-1V3"/></svg><svg class="ic" style="left:13.00px;top:59.60px" width="16" height="16" viewBox="0 0 24 24" fill="none" stroke="#34d399" stroke-width="2" stroke-linecap="round" stroke-linejoin="round"><path d="M12 5v14"/><path d="m19 12-7 7-7-7"/></svg><svg class="ic" style="left:528.00px;top:59.00px" width="16" height="16" viewBox="0 0 24 24" fill="none" stroke="#60a5fa" stroke-width="2" stroke-linecap="round" stroke-linejoin="round"><path d="m5 12 7-7 7 7"/><path d="M12 19V5"/></svg><i class="lb" style="left:247.00px;top:95.30px;width:12px;height:12px;background:#168a63;border-radius:2px"></i><i class="lb" style="left:345.00px;top:95.30px;width:12px;height:12px;background:#3366c4;border-radius:2px"></i><i class="lb" style="left:595.00px;top:105.00px;width:8px;height:8px;background:#22a04b;border-radius:50%"></i><svg class="chart" width="651" height="280" viewBox="0 0 651 280"><defs><clipPath id="clip-net"><rect x="58.20" y="120.40" width="520.60" height="106.20"/></clipPath></defs><line x1="58.20" x2="578.80" y1="132.40" y2="132.40" stroke="rgba(100,116,139,0.22)" stroke-width="1" stroke-dasharray="3 3"/><line x1="58.20" x2="578.80" y1="151.24" y2="151.24" stroke="rgba(100,116,139,0.22)" stroke-width="1" stroke-dasharray="3 3"/><line x1="58.20" x2="578.80" y1="170.08" y2="170.08" stroke="rgba(100,116,139,0.22)" stroke-width="1" stroke-dasharray="3 3"/><line x1="58.20" x2="578.80" y1="188.92" y2="188.92" stroke="rgba(100,116,139,0.22)" stroke-width="1" stroke-dasharray="3 3"/><line x1="58.20" x2="578.80" y1="207.76" y2="207.76" stroke="rgba(100,116,139,0.22)" stroke-width="1" stroke-dasharray="3 3"/><line x1="105.40" x2="105.40" y1="132.40" y2="226.60" stroke="rgba(100,116,139,0.22)" stroke-width="1" stroke-dasharray="3 3"/><line x1="165.50" x2="165.50" y1="132.40" y2="226.60" stroke="rgba(100,116,139,0.22)" stroke-width="1" stroke-dasharray="3 3"/><line x1="225.60" x2="225.60" y1="132.40" y2="226.60" stroke="rgba(100,116,139,0.22)" stroke-width="1" stroke-dasharray="3 3"/><line x1="285.70" x2="285.70" y1="132.40" y2="226.60" stroke="rgba(100,116,139,0.22)" stroke-width="1" stroke-dasharray="3 3"/><line x1="345.80" x2="345.80" y1="132.40" y2="226.60" stroke="rgba(100,116,139,0.22)" stroke-width="1" stroke-dasharray="3 3"/><line x1="406.00" x2="406.00" y1="132.40" y2="226.60" stroke="rgba(100,116,139,0.22)" stroke-width="1" stroke-dasharray="3 3"/><line x1="466.10" x2="466.10" y1="132.40" y2="226.60" stroke="rgba(100,116,139,0.22)" stroke-width="1" stroke-dasharray="3 3"/><line x1="526.20" x2="526.20" y1="132.40" y2="226.60" stroke="rgba(100,116,139,0.22)" stroke-width="1" stroke-dasharray="3 3"/><g clip-path="url(#clip-net)"><path d="M58.2 226.0C72.0 226.0 83.8 226.4 97.5 226.0C102.8 225.8 107.3 224.4 112.5 224.4C117.3 224.4 121.5 225.6 126.3 226.0C129.0 226.2 131.4 226.4 134.1 226.0C138.4 225.4 142.0 223.2 146.2 223.3C151.1 223.4 155.3 226.0 160.3 226.4C167.6 227.0 174.0 226.8 181.3 226.4C186.1 226.1 190.2 224.5 195.0 224.4C199.8 224.3 203.9 225.8 208.7 226.0C220.7 226.6 231.0 226.8 243.0 226.8C249.8 226.8 256.8 228.7 262.4 226.1C267.2 223.9 268.9 217.3 272.9 213.1C275.3 210.6 277.9 206.4 280.7 206.8C285.2 207.5 289.1 213.1 293.8 216.3C297.4 218.7 300.5 220.9 304.3 222.9C306.9 224.3 309.2 225.5 312.1 226.0C316.8 226.8 321.1 226.4 326.0 226.4C339.8 226.4 351.7 227.0 365.3 226.0C370.0 225.6 373.8 222.7 378.4 222.5C383.8 222.3 388.6 224.1 394.1 224.8C398.7 225.4 402.6 225.8 407.2 226.0C415.4 226.3 422.6 226.8 430.8 226.0C436.6 225.4 441.4 222.5 447.1 222.2C451.9 221.9 456.1 223.7 460.9 224.4C465.9 225.1 470.2 225.9 475.3 226.0C495.5 226.4 512.8 226.0 533.0 226.0C549.0 226.0 562.7 226.0 578.7 226.0L578.7 226.6L58.2 226.6Z" fill="rgba(59,130,246,0.25)" stroke="none"/><path d="M58.2 226.0C72.0 226.0 83.8 226.4 97.5 226.0C102.8 225.8 107.3 224.4 112.5 224.4C117.3 224.4 121.5 225.6 126.3 226.0C129.0 226.2 131.4 226.4 134.1 226.0C138.4 225.4 142.0 223.2 146.2 223.3C151.1 223.4 155.3 226.0 160.3 226.4C167.6 227.0 174.0 226.8 181.3 226.4C186.1 226.1 190.2 224.5 195.0 224.4C199.8 224.3 203.9 225.8 208.7 226.0C220.7 226.6 231.0 226.8 243.0 226.8C249.8 226.8 256.8 228.7 262.4 226.1C267.2 223.9 268.9 217.3 272.9 213.1C275.3 210.6 277.9 206.4 280.7 206.8C285.2 207.5 289.1 213.1 293.8 216.3C297.4 218.7 300.5 220.9 304.3 222.9C306.9 224.3 309.2 225.5 312.1 226.0C316.8 226.8 321.1 226.4 326.0 226.4C339.8 226.4 351.7 227.0 365.3 226.0C370.0 225.6 373.8 222.7 378.4 222.5C383.8 222.3 388.6 224.1 394.1 224.8C398.7 225.4 402.6 225.8 407.2 226.0C415.4 226.3 422.6 226.8 430.8 226.0C436.6 225.4 441.4 222.5 447.1 222.2C451.9 221.9 456.1 223.7 460.9 224.4C465.9 225.1 470.2 225.9 475.3 226.0C495.5 226.4 512.8 226.0 533.0 226.0C549.0 226.0 562.7 226.0 578.7 226.0" fill="none" stroke="#3b82f6" stroke-width="2" stroke-linejoin="round" stroke-linecap="round"/><path d="M58.2 226.0C65.6 225.9 71.8 225.8 79.2 225.8C85.6 225.8 91.2 226.8 97.5 225.9C102.9 225.2 107.3 221.1 112.5 221.2C117.4 221.3 121.4 224.9 126.3 226.4C127.6 226.8 129.2 227.3 130.2 226.5C136.1 221.7 140.7 210.6 146.2 210.4C151.2 210.2 154.7 221.5 160.3 225.5C162.4 227.1 165.5 226.7 168.2 226.4C171.9 226.0 174.9 224.1 178.6 223.3C183.8 222.2 188.5 220.8 193.7 221.2C199.5 221.7 204.2 225.0 210.0 225.9C215.8 226.8 221.1 226.0 227.0 226.1C232.6 226.2 237.4 226.3 243.0 226.3C248.0 226.3 252.3 226.5 257.2 226.0C261.4 225.5 265.6 225.6 269.0 223.5C272.9 221.1 276.3 217.5 278.1 213.1C282.3 202.8 283.1 192.6 286.0 181.6C289.2 169.8 292.3 147.9 295.5 147.9C298.7 147.9 301.8 169.7 304.3 181.6C307.4 196.6 308.2 210.3 311.5 224.8C311.7 225.9 313.4 225.9 314.5 226.0C319.4 226.3 323.7 225.9 328.7 225.9C339.2 226.0 348.3 226.5 358.8 226.4C361.1 226.4 363.1 226.1 365.3 225.5C370.0 224.1 373.9 220.5 378.4 220.6C383.0 220.7 386.7 225.2 391.5 226.1C397.1 227.2 402.2 226.4 408.0 226.4C414.6 226.5 420.7 227.8 426.9 226.4C431.4 225.4 434.3 221.5 438.6 219.6C441.4 218.4 444.1 217.1 447.1 217.4C452.9 218.0 457.7 220.4 463.5 222.0C469.0 223.5 473.6 225.6 479.2 226.1C489.6 227.0 498.8 225.9 509.3 225.9C521.1 225.9 531.2 226.2 543.0 226.2C555.5 226.2 566.2 226.0 578.7 225.9L578.7 226.6L58.2 226.6Z" fill="rgba(16,185,129,0.2)" stroke="none"/><path d="M58.2 226.0C65.6 225.9 71.8 225.8 79.2 225.8C85.6 225.8 91.2 226.8 97.5 225.9C102.9 225.2 107.3 221.1 112.5 221.2C117.4 221.3 121.4 224.9 126.3 226.4C127.6 226.8 129.2 227.3 130.2 226.5C136.1 221.7 140.7 210.6 146.2 210.4C151.2 210.2 154.7 221.5 160.3 225.5C162.4 227.1 165.5 226.7 168.2 226.4C171.9 226.0 174.9 224.1 178.6 223.3C183.8 222.2 188.5 220.8 193.7 221.2C199.5 221.7 204.2 225.0 210.0 225.9C215.8 226.8 221.1 226.0 227.0 226.1C232.6 226.2 237.4 226.3 243.0 226.3C248.0 226.3 252.3 226.5 257.2 226.0C261.4 225.5 265.6 225.6 269.0 223.5C272.9 221.1 276.3 217.5 278.1 213.1C282.3 202.8 283.1 192.6 286.0 181.6C289.2 169.8 292.3 147.9 295.5 147.9C298.7 147.9 301.8 169.7 304.3 181.6C307.4 196.6 308.2 210.3 311.5 224.8C311.7 225.9 313.4 225.9 314.5 226.0C319.4 226.3 323.7 225.9 328.7 225.9C339.2 226.0 348.3 226.5 358.8 226.4C361.1 226.4 363.1 226.1 365.3 225.5C370.0 224.1 373.9 220.5 378.4 220.6C383.0 220.7 386.7 225.2 391.5 226.1C397.1 227.2 402.2 226.4 408.0 226.4C414.6 226.5 420.7 227.8 426.9 226.4C431.4 225.4 434.3 221.5 438.6 219.6C441.4 218.4 444.1 217.1 447.1 217.4C452.9 218.0 457.7 220.4 463.5 222.0C469.0 223.5 473.6 225.6 479.2 226.1C489.6 227.0 498.8 225.9 509.3 225.9C521.1 225.9 531.2 226.2 543.0 226.2C555.5 226.2 566.2 226.0 578.7 225.9" fill="none" stroke="#10b981" stroke-width="2" stroke-linejoin="round" stroke-linecap="round"/></g><line x1="58.20" x2="58.20" y1="132.40" y2="227.10" stroke="#3f4d54" stroke-width="1.2"/><line x1="58.20" x2="578.80" y1="226.80" y2="226.80" stroke="#414c53" stroke-width="2"/><text x="53.40" y="135.41" text-anchor="end" font-size="9.8" fill="#b9bfc8">0.63</text><text x="53.40" y="154.25" text-anchor="end" font-size="9.8" fill="#b9bfc8">0.50</text><text x="53.40" y="173.09" text-anchor="end" font-size="9.8" fill="#b9bfc8">0.38</text><text x="53.40" y="191.93" text-anchor="end" font-size="9.8" fill="#b9bfc8">0.25</text><text x="53.40" y="210.77" text-anchor="end" font-size="9.8" fill="#b9bfc8">0.13</text><text x="53.40" y="229.61" text-anchor="end" font-size="9.8" fill="#b9bfc8">0.00</text><text x="63.0" y="124.1" font-size="9" font-weight="700" fill="#60a5fa">MB/s</text><g clip-path="url(#clip-net)"><circle cx="578.7" cy="226.0" r="8" fill="#1e6e70"/><circle cx="578.7" cy="226.0" r="3" fill="#10b981"/></g></svg><span class="t" style="left:40.67px;top:20.90px;font-size:13.7px;color:#9ca3af;transform:scaleX(0.9343)">NETWORK</span><span class="t" style="left:114.00px;top:21.00px;font-size:14.6px;color:#727a85;font-weight:700">|</span><span class="t" style="left:125.36px;top:20.60px;font-size:16.8px;color:#f3f4f6;font-weight:700;-webkit-text-stroke:0.30px;transform:scaleX(1.0439)">Realtek PCIe GbE Family Controller #2</span><span class="t" style="left:577.80px;top:17.00px;font-size:13.4px;color:#34d399;-webkit-text-stroke:0.46px;transform:scaleX(1.0269)">OPTIMAL</span><span class="t" style="left:37.10px;top:59.80px;font-size:17.6px;color:#34d399;font-weight:700;-webkit-text-stroke:0.32px;transform:scaleX(1.0531)">0.04 MB/s</span><span class="t" style="left:297.74px;top:61.90px;font-size:13.6px;color:#22d3ee;-webkit-text-stroke:0.46px;transform:scaleX(1.0630)">Ethernet</span><span class="t" style="left:552.10px;top:59.60px;font-size:17.6px;color:#60a5fa;font-weight:700;-webkit-text-stroke:0.32px;transform:scaleX(1.0519)">0.01 MB/s</span><span class="t" style="left:267.10px;top:95.80px;font-size:12.0px;color:#a3aab5;transform:scaleX(1.0191)">Download</span><span class="t" style="left:365.70px;top:95.80px;font-size:12.0px;color:#a3aab5;transform:scaleX(1.0039)">Upload</span><span class="t" style="left:607.10px;top:103.70px;font-size:12.8px;color:#9ca3af;transform:scaleX(0.8013)">LIVE</span><span class="t" style="left:196.52px;top:262.20px;font-size:14.0px;color:#9ca3af;transform:scaleX(0.9758)">Latency:</span><span class="t" style="left:255.70px;top:262.20px;font-size:14.0px;color:#c084fc;font-weight:700;-webkit-text-stroke:0.25px;transform:scaleX(0.9647)">36 ms</span><span class="t" style="left:302.50px;top:264.20px;font-size:12.4px;color:#22d3ee;transform:scaleX(0.9485)">Google</span><span class="t" style="left:349.10px;top:265.20px;font-size:11.8px;color:#6b7280;transform:scaleX(0.9979)">(tested every 2 min)</span></section>
</body></html>
